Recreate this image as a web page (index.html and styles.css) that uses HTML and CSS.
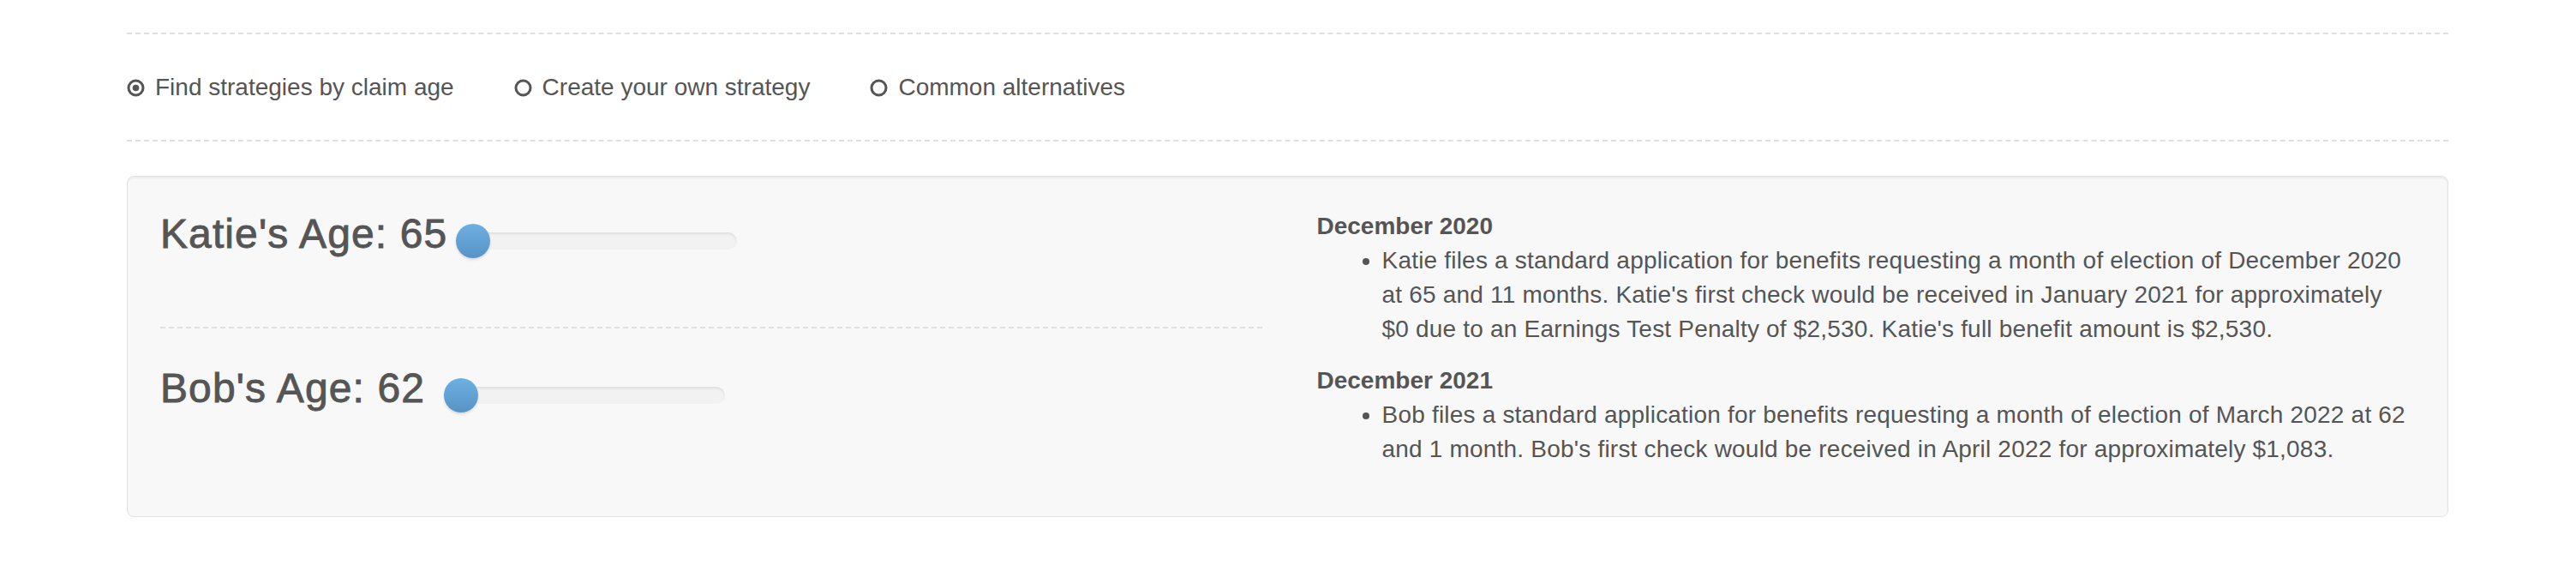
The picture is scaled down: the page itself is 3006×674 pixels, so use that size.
FILE: index.html
```html
<!DOCTYPE html>
<html>
<head>
  <title>Claim strategies</title>
  <link rel="stylesheet" href="styles.css">
</head>
<body>
  <div class="container">
    <div class="mode-picker">
      <label class="mode">
        <svg class="radio-icon" viewBox="0 0 22 22"><circle cx="11" cy="11" r="8.9"/><circle class="dot" cx="11" cy="11" r="4"/></svg>
        Find strategies by claim age
      </label>
      <label class="mode">
        <svg class="radio-icon" viewBox="0 0 22 22"><circle cx="11" cy="11" r="8.9"/></svg>
        Create your own strategy
      </label>
      <label class="mode">
        <svg class="radio-icon" viewBox="0 0 22 22"><circle cx="11" cy="11" r="8.9"/></svg>
        Common alternatives
      </label>
    </div>

    <div class="well">
      <div class="ages">
        <div class="age-row first">
          <h3>Katie's Age: 65</h3>
          <div class="slider">
            <div class="track"></div>
            <div class="handle"></div>
          </div>
        </div>
        <div class="divider"></div>
        <div class="age-row">
          <h3>Bob's Age: 62</h3>
          <div class="slider spaced">
            <div class="track"></div>
            <div class="handle"></div>
          </div>
        </div>
      </div>

      <div class="timeline">
        <div class="month">December 2020</div>
        <ul>
          <li>Katie files a standard application for benefits requesting a month of election of December 2020 at 65 and 11 months. Katie's first check would be received in January 2021 for approximately $0 due to an Earnings Test Penalty of $2,530. Katie's full benefit amount is $2,530.</li>
        </ul>
        <div class="month">December 2021</div>
        <ul>
          <li>Bob files a standard application for benefits requesting a month of election of March 2022 at 62 and 1 month. Bob's first check would be received in April 2022 for approximately $1,083.</li>
        </ul>
      </div>
    </div>
  </div>
</body>
</html>
```

FILE: styles.css
```css
body {
  margin: 0;
  font-family: "Liberation Sans", Arial, Helvetica, sans-serif;
  font-size: 28px;
  line-height: 40px;
  color: #555;
  background: #fff;
}
.container {
  margin: 0 149px 0 148px;
  padding-top: 38px;
}
.mode-picker {
  display: flex;
  align-items: center;
  gap: 70px;
  padding: 42px 0 41px;
  border-top: 2px dashed #e0e0e0;
  border-bottom: 2px dashed #e0e0e0;
}
.mode {
  display: flex;
  align-items: center;
  gap: 12px;
}
.radio-icon {
  width: 21px;
  height: 21px;
  fill: none;
  stroke: #555;
  stroke-width: 3.2;
}
.radio-icon .dot {
  fill: #555;
  stroke: none;
}
.well {
  margin-top: 40px;
  display: grid;
  grid-template-columns: 1fr 1fr;
  column-gap: 60px;
  padding: 38px;
  background: #f8f8f8;
  border: 1px solid #e3e3e3;
  border-radius: 8px;
  box-shadow: inset 0 2px 2px rgba(0, 0, 0, 0.05);
}
.age-row {
  display: flex;
  align-items: flex-start;
}
.age-row.first {
  margin-top: 2px;
}
.age-row h3 {
  margin: 0;
  font-size: 48px;
  line-height: 53px;
  font-weight: 500;
  letter-spacing: 1.1px;
  -webkit-text-stroke: 0.9px #555;
}
.slider {
  position: relative;
  width: 328px;
  height: 40px;
  margin: 15px 0 0 10px;
}
.slider.spaced {
  margin-left: 22px;
}
.track {
  margin: 10px 0 0 20px;
  height: 20px;
  border-radius: 10px;
  background: #f2f2f2;
  box-shadow: inset 0 2px 3px rgba(0, 0, 0, 0.08);
}
.handle {
  position: absolute;
  left: 0;
  top: 0;
  width: 40px;
  height: 40px;
  border-radius: 50%;
  background: linear-gradient(#6db0e2, #5893c5);
  box-shadow: 0 2px 3px rgba(0, 0, 0, 0.12);
}
.divider {
  border-top: 2px dashed #e0e0e0;
  margin: 80px 0 43px;
}
.month {
  padding-left: 4px;
  font-weight: bold;
}
.timeline ul {
  margin: 0 0 20px;
  padding-left: 80px;
  letter-spacing: 0.2px;
}
```
